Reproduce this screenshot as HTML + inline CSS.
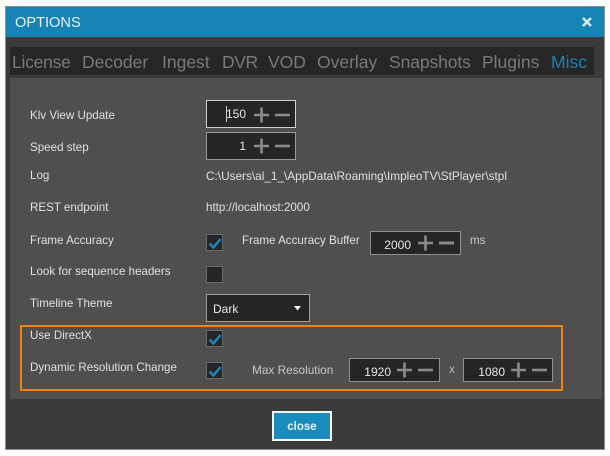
<!DOCTYPE html>
<html><head><meta charset="utf-8">
<style>
html,body{margin:0;padding:0;background:#fff}
#r{position:relative;width:610px;height:456px;overflow:hidden;background:#fdfdfd;font-family:"Liberation Sans",sans-serif;filter:blur(.35px)}
#r div,#r span,#r svg{position:absolute;display:block;box-sizing:border-box;white-space:nowrap}
.l{font-size:11.6px;color:#e0e0e0;line-height:18px;height:18px}
.t{font-size:17.5px;color:#7a7a7a;line-height:24px;top:50px}
.s{background:#252525;border:1px solid #8f8f8f;width:91px;height:24px}
.v{color:#e8e8e8;font-size:12px;line-height:16px;text-align:right}
.p{left:46px;top:4px;width:18px;height:16px}
.cb{width:17px;height:17px;background:#252525;border:1px solid #6a6a6a;left:206px}
</style></head><body>
<div id="r">
<div style="left:5px;top:6px;width:600px;height:444px;background:#3a3a3a;border:1px solid #8d8d8d"></div>
<div style="left:6px;top:7px;width:598px;height:30px;background:#1583b3"></div>
<div style="left:15px;top:13px;font-size:14.6px;line-height:20px;color:#e6f2f7">OPTIONS</div>
<svg style="left:581px;top:16px" width="12" height="12" viewBox="0 0 12 12"><path d="M2 2L10 10M10 2L2 10" stroke="#d8e8ef" stroke-width="2.6"/></svg>

<div style="left:10px;top:47px;width:584px;height:28px;background:#262626"></div>
<div class="t" style="left:12px;letter-spacing:-.25px">License</div>
<div class="t" style="left:82px">Decoder</div>
<div class="t" style="left:162px">Ingest</div>
<div class="t" style="left:222px;letter-spacing:-.4px">DVR</div>
<div class="t" style="left:268px">VOD</div>
<div class="t" style="left:317px">Overlay</div>
<div class="t" style="left:389px;letter-spacing:-.1px">Snapshots</div>
<div class="t" style="left:482px">Plugins</div>
<div class="t" style="left:551px;color:#1b82b8">Misc</div>

<div style="left:10px;top:78px;width:592px;height:321px;background:#4f4f4f"></div>

<div class="l" style="left:30px;top:107px">Klv View Update</div>
<div class="l" style="left:30px;top:139px">Speed step</div>
<div class="l" style="left:30px;top:167px">Log</div>
<div class="l" style="left:30px;top:199px">REST endpoint</div>
<div class="l" style="left:30px;top:232px">Frame Accuracy</div>
<div class="l" style="left:30px;top:263px">Look for sequence headers</div>
<div class="l" style="left:30px;top:295px">Timeline Theme</div>
<div class="l" style="left:30px;top:327px">Use DirectX</div>
<div class="l" style="left:30px;top:359px">Dynamic Resolution Change</div>

<div class="s" style="left:206px;top:100px;width:90px;height:28px;border-color:#d0d0d0">
<div style="left:19px;top:5px;width:1px;height:16px;background:#ccc"></div>
<div class="v" style="left:15px;top:5px;width:24px">150</div>
<svg class="p" style="left:46px;top:6px" width="18" height="16" viewBox="0 0 18 16"><path d="M1 8H16M8.500 .5V15.500" stroke="#8a8a8a" stroke-width="2.6"/></svg>
<svg style="left:68px;top:6px" width="16" height="16" viewBox="0 0 16 16"><path d="M0 8H15" stroke="#8a8a8a" stroke-width="2.6"/></svg>
</div>
<div class="s" style="left:206px;top:132px;width:90px;height:28px;border-color:#9a9a9a">
<div class="v" style="left:15px;top:5px;width:24px">1</div>
<svg class="p" style="left:46px;top:5px" width="18" height="16" viewBox="0 0 18 16"><path d="M1 8H16M8.500 .5V15.500" stroke="#8a8a8a" stroke-width="2.6"/></svg>
<svg style="left:68px;top:5px" width="16" height="16" viewBox="0 0 16 16"><path d="M0 8H15" stroke="#8a8a8a" stroke-width="2.6"/></svg>
</div>

<div class="l" style="left:206px;top:167px;width:301px;overflow:hidden;font-size:11.8px">C:\Users\al_1_\AppData\Roaming\ImpleoTV\StPlayer\stpl</div>
<div class="l" style="left:206px;top:199px">http://localhost:2000</div>

<div class="cb" style="top:234px"><svg style="left:1px;top:1px" width="14" height="14" viewBox="0 0 14 14"><path d="M1.5 7.5L5.5 11.5L12.5 3" fill="none" stroke="#1a85b8" stroke-width="2.6"/></svg></div>
<div class="l" style="left:242px;top:232px">Frame Accuracy Buffer</div>
<div class="s" style="left:370px;top:231px">
<div class="v" style="left:10px;top:5px;width:30px">2000</div>
<svg class="p" style="left:46px;top:3px" width="18" height="16" viewBox="0 0 18 16"><path d="M1 8H16M8.500 .5V15.500" stroke="#8a8a8a" stroke-width="2.6"/></svg>
<svg style="left:68px;top:3px" width="16" height="16" viewBox="0 0 16 16"><path d="M0 8H15" stroke="#8a8a8a" stroke-width="3"/></svg>
</div>
<div class="l" style="left:470px;top:232px;color:#c8c8c8">ms</div>

<div class="cb" style="top:266px"></div>

<div class="s" style="left:206px;top:294px;width:104px;height:28px;border-color:#a0a0a0">
<div class="v" style="left:6px;top:6px;text-align:left">Dark</div>
<svg style="left:87px;top:11px" width="7" height="5" viewBox="0 0 7 5"><path d="M0 0H7L3.500 4.500Z" fill="#f0f0f0"/></svg>
</div>

<div style="left:20px;top:325px;width:543px;height:66px;border:2px solid #f5820f"></div>

<div class="cb" style="top:330px"><svg style="left:1px;top:1px" width="14" height="14" viewBox="0 0 14 14"><path d="M1.5 7.5L5.5 11.5L12.5 3" fill="none" stroke="#1a85b8" stroke-width="2.6"/></svg></div>
<div class="cb" style="top:362px"><svg style="left:1px;top:1px" width="14" height="14" viewBox="0 0 14 14"><path d="M1.5 7.5L5.5 11.5L12.5 3" fill="none" stroke="#1a85b8" stroke-width="2.6"/></svg></div>
<div class="l" style="left:252px;top:361px;color:#c8c8c8;font-size:11.8px">Max Resolution</div>

<div class="s" style="left:349px;top:358px">
<div class="v" style="left:10px;top:5px;width:31px">1920</div>
<svg class="p" style="left:46px;top:3px" width="18" height="16" viewBox="0 0 18 16"><path d="M1 8H16M8.500 .5V15.500" stroke="#8a8a8a" stroke-width="2.6"/></svg>
<svg style="left:68px;top:3px" width="16" height="16" viewBox="0 0 16 16"><path d="M0 8H15" stroke="#8a8a8a" stroke-width="2.6"/></svg>
</div>
<div class="l" style="left:449px;top:361px;color:#b8b8b8">x</div>
<div class="s" style="left:463px;top:358px;width:90px">
<div class="v" style="left:10px;top:5px;width:31px">1080</div>
<svg class="p" style="left:46px;top:3px" width="18" height="16" viewBox="0 0 18 16"><path d="M1 8H16M8.500 .5V15.500" stroke="#8a8a8a" stroke-width="2.6"/></svg>
<svg style="left:68px;top:3px" width="16" height="16" viewBox="0 0 16 16"><path d="M0 8H15" stroke="#8a8a8a" stroke-width="2.6"/></svg>
</div>

<div style="left:272px;top:411px;width:60px;height:30px;background:#1a8cbb;border:2px solid #f4f8fa;color:#e8f4f9;font-size:11.5px;font-weight:bold;text-align:center;line-height:29px">close</div>
</div>
</body></html>
